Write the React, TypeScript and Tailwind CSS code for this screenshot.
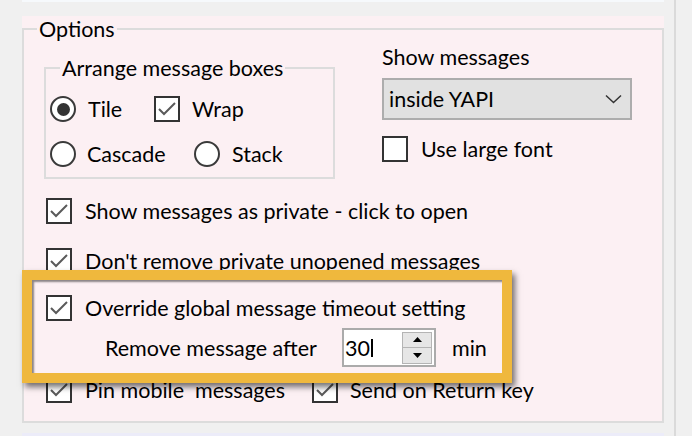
import React from "react";

function Check({ checked }: { checked?: boolean }) {
  return (
    <span className="flex h-[26px] w-[26px] shrink-0 items-center justify-center border-2 border-[#333333] bg-white">
      {checked && (
        <svg width="22" height="22" viewBox="0 0 22 22">
          <polyline points="3,11 8,16 19,5" fill="none" stroke="#5a5a5a" strokeWidth="2" />
        </svg>
      )}
    </span>
  );
}

function Radio({ on }: { on?: boolean }) {
  return (
    <span className="flex h-[26px] w-[26px] shrink-0 items-center justify-center rounded-full border-2 border-[#3a3a3a] bg-white">
      {on && <span className="h-[13px] w-[13px] rounded-full bg-[#333333]" />}
    </span>
  );
}

export default function App() {
  return (
    <div className="relative flex h-[436px] w-[692px] overflow-hidden bg-[#f0f0f0] font-[Lato,'Liberation_Sans',sans-serif] text-[21.5px] leading-[26px] text-black">
      <div className="w-[22px] shrink-0" />
      <div className="flex w-[642px] shrink-0 flex-col">
        <div className="h-[2px] bg-[#f6f9fc]" />
        <div className="h-[14px]" />
        <div className="h-[407px] bg-[#fcf0f3]">
          <fieldset className="h-[407px] border-2 border-[#dcdcdc]">
            <legend className="ml-[13px] px-[2px] leading-[26px]">Options</legend>

            <div className="flex">
              <fieldset className="ml-[20px] mt-[13px] h-[124px] w-[291px] shrink-0 border-2 border-[#dcdcdc]">
                <legend className="ml-[14px] px-[2px] leading-[26px]">Arrange message boxes</legend>
                <div className="flex flex-col pl-[4px] pt-[15px]">
                  <div className="flex h-[26px] items-center">
                    <div className="flex w-[104px] items-center gap-[12px]">
                      <Radio on />
                      <span>Tile</span>
                    </div>
                    <div className="flex items-center gap-[12px]">
                      <Check checked />
                      <span>Wrap</span>
                    </div>
                  </div>
                  <div className="mt-[19px] flex h-[26px] items-center">
                    <div className="flex w-[144px] items-center gap-[11px]">
                      <Radio />
                      <span>Cascade</span>
                    </div>
                    <div className="flex items-center gap-[12px]">
                      <Radio />
                      <span>Stack</span>
                    </div>
                  </div>
                </div>
              </fieldset>

              <div className="ml-[47px] flex flex-col">
                <div className="mt-[2px] h-[26px]">Show messages</div>
                <div className="mt-[8px] flex h-[42px] w-[250px] items-center justify-between border-2 border-[#adadad] bg-[#e1e1e1] pl-[5px] pr-[8px]">
                  <span>inside YAPI</span>
                  <svg width="17" height="10" viewBox="0 0 17 10">
                    <polyline points="1,1.5 8.5,8.5 16,1.5" fill="none" stroke="#333" strokeWidth="1.5" />
                  </svg>
                </div>
                <div className="mt-[16px] flex h-[26px] items-center gap-[13px]">
                  <Check />
                  <span>Use large font</span>
                </div>
              </div>
            </div>

            <div className="ml-[22px] mt-[19px] flex h-[26px] items-center gap-[13px]">
              <Check checked />
              <span>Show messages as private - click to open</span>
            </div>
            <div className="ml-[22px] mt-[24px] flex h-[26px] items-center gap-[13px]">
              <Check checked />
              <span>Don't remove private unopened messages</span>
            </div>
            <div className="ml-[22px] mt-[21px] flex h-[26px] items-center gap-[13px]">
              <Check checked />
              <span>Override global message timeout setting</span>
            </div>
            <div className="ml-[81px] mt-[7px] flex h-[39px] items-center">
              <span className="w-[217px]">Remove message after</span>
              <div className="ml-[20px] flex h-[39px] w-[94px] items-center border-2 border-[#ababab] bg-white">
                <div className="flex flex-1 items-center pl-[1px]">
                  <span>30</span>
                  <span className="ml-[1px] h-[18px] w-[2px] bg-black" />
                </div>
                <div className="mr-[2px] flex h-[32px] w-[30px] flex-col border border-[#b4b4b4] bg-[#e6e6e6]">
                  <div className="flex flex-1 items-center justify-center border-b border-[#b4b4b4]">
                    <svg width="9" height="5" viewBox="0 0 9 5">
                      <polygon points="0,5 4.5,0 9,5" fill="#000" />
                    </svg>
                  </div>
                  <div className="flex flex-1 items-center justify-center">
                    <svg width="9" height="5" viewBox="0 0 9 5">
                      <polygon points="0,0 4.5,5 9,0" fill="#000" />
                    </svg>
                  </div>
                </div>
              </div>
              <span className="ml-[16px]">min</span>
            </div>
            <div className="ml-[22px] mt-[10px] flex h-[26px] items-center">
              <div className="flex w-[266px] items-center gap-[13px]">
                <Check checked />
                <span className="whitespace-pre">Pin mobile  messages</span>
              </div>
              <div className="flex items-center gap-[12px]">
                <Check checked />
                <span>Send on Return key</span>
              </div>
            </div>
          </fieldset>
        </div>
        <div className="h-[10px]" />
        <div className="h-[3px] bg-[#ececf9]" />
      </div>
      <div className="w-[10px] shrink-0" />
      <div className="h-full w-[2px] shrink-0 bg-[#dadada]" />

      <div className="pointer-events-none absolute left-[22px] top-[270px] h-[113px] w-[490px] border-[10px] border-[#efb83d] shadow-[3px_4px_6px_rgba(0,0,0,0.55),inset_2px_2px_2px_rgba(0,0,0,0.45)]" />
    </div>
  );
}
